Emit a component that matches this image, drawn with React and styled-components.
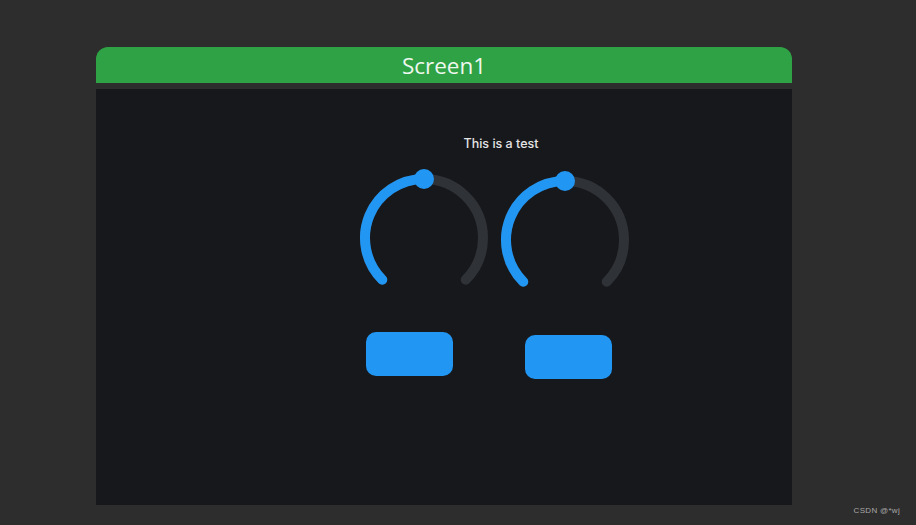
import React from "react";
import styled, { createGlobalStyle } from "styled-components";

const GlobalStyle = createGlobalStyle`
  html, body {
    margin: 0;
    padding: 0;
    background: #2d2d2d;
    width: 916px;
    height: 525px;
    overflow: hidden;
  }
`;

const Page = styled.div`
  position: relative;
  width: 916px;
  height: 525px;
  padding: 47px 0 0 96px;
  box-sizing: border-box;
`;

const Window = styled.div`
  width: 696px;
  display: flex;
  flex-direction: column;
  gap: 6px;
`;

const Header = styled.div`
  height: 36px;
  background: #2ea244;
  border-radius: 12px 12px 0 0;
  display: flex;
  align-items: center;
  justify-content: center;
  font-family: "Open Sans", "Noto Sans", sans-serif;
  font-size: 22.5px;
  color: #eef7ee;
`;

const Screen = styled.div`
  height: 416px;
  background: #17181c;
  padding: 48px 0 0 258px;
  box-sizing: border-box;
  display: flex;
  flex-direction: column;
`;

const Label = styled.div`
  width: 280px;
  padding-left: 14px;
  box-sizing: border-box;
  text-align: center;
  font-family: Inter, "Noto Sans", sans-serif;
  font-size: 12.5px;
  font-weight: 500;
  color: #e4e4e6;
  line-height: 14px;
`;

const Row = styled.div`
  display: flex;
  margin-top: 17px;
`;

const Column = styled.div`
  width: 140px;
  display: flex;
  flex-direction: column;
  margin-top: ${(p) => p.$shift}px;
  margin-left: ${(p) => p.$left || 0}px;
`;

const Button = styled.button`
  width: 87px;
  height: 44px;
  border: none;
  border-radius: 10px;
  background: #2196f3;
  margin-left: ${(p) => p.$left}px;
  margin-top: ${(p) => p.$top}px;
  padding: 0;
  cursor: pointer;
`;

const Watermark = styled.div`
  position: absolute;
  right: 16px;
  bottom: 10px;
  font-family: "Liberation Sans", Arial, sans-serif;
  font-size: 8px;
  letter-spacing: 0.3px;
  color: #a8a8a8;
`;

const Arc = ({ value = 0.5 }) => {
  const r = 59;
  const c = 70;
  const s = Math.SQRT1_2 * r;
  const start = `${c - s} ${c + s}`;
  const end = `${c + s} ${c + s}`;
  const ang = ((-135 + 270 * value) * Math.PI) / 180;
  const kx = c + r * Math.sin(ang);
  const ky = c - r * Math.cos(ang);
  return (
    <svg width="140" height="140" viewBox="0 0 140 140">
      <path
        d={`M ${start} A ${r} ${r} 0 1 1 ${end}`}
        fill="none"
        stroke="#2f3237"
        strokeWidth="10"
        strokeLinecap="round"
      />
      <path
        d={`M ${start} A ${r} ${r} 0 ${value > 0.667 ? 1 : 0} 1 ${kx} ${ky}`}
        fill="none"
        stroke="#2196f3"
        strokeWidth="10"
        strokeLinecap="round"
      />
      <circle cx={kx} cy={ky} r="10" fill="#2196f3" />
    </svg>
  );
};

const App = () => (
  <>
    <GlobalStyle />
    <Page>
      <Window>
        <Header>Screen1</Header>
        <Screen>
          <Label>This is a test</Label>
          <Row>
            <Column $shift={0}>
              <Arc value={0.5} />
              <Button $left={12} $top={24} />
            </Column>
            <Column $shift={2} $left={1}>
              <Arc value={0.5} />
              <Button $left={30} $top={25} />
            </Column>
          </Row>
        </Screen>
      </Window>
      <Watermark>CSDN @*wj</Watermark>
    </Page>
  </>
);

export default App;
